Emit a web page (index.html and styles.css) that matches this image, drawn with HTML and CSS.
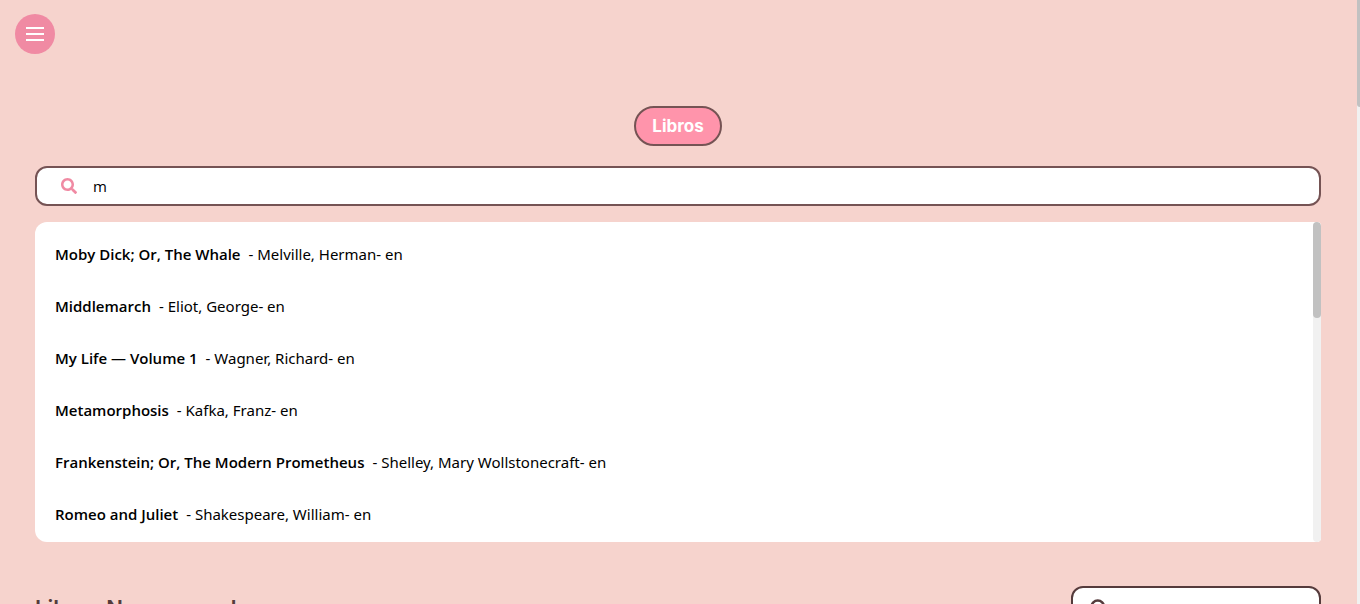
FILE: index.html
```html
<!DOCTYPE html>
<html lang="es">
<head>
<meta charset="utf-8">
<title>Libros</title>
<link rel="stylesheet" href="styles.css">
</head>
<body>
<div class="shell">
  <div class="page">
    <header class="topbar">
      <button class="menu" type="button" aria-label="Menú">
        <svg width="18" height="14" viewBox="0 0 18 14" aria-hidden="true"><path d="M0 1h18M0 7h18M0 13h18" stroke="#fff" stroke-width="2"/></svg>
      </button>
    </header>
    <main class="content">
      <button class="pill" type="button">Libros</button>
      <label class="search">
        <svg class="search-icon" width="16" height="16" viewBox="0 0 512 512" aria-hidden="true"><path fill="currentColor" d="M505 442.700L405.300 343c-4.500-4.500-10.600-7-17-7H372c27.600-35.300 44-79.700 44-128C416 93.100 322.900 0 208 0S0 93.100 0 208s93.100 208 208 208c48.300 0 92.700-16.400 128-44v16.300c0 6.400 2.500 12.500 7 17l99.700 99.700c9.400 9.400 24.600 9.400 33.900 0l28.300-28.300c9.400-9.400 9.400-24.600.1-34zM208 336c-70.700 0-128-57.200-128-128 0-70.700 57.200-128 128-128 70.700 0 128 57.200 128 128 0 70.700-57.200 128-128 128z"/></svg>
        <input class="search-input" type="text" value="m" aria-label="Buscar libros">
      </label>
      <div class="results">
        <ul class="result-list">
          <li class="result"><strong class="title">Moby Dick; Or, The Whale</strong><span class="meta">- Melville, Herman- en</span></li>
          <li class="result"><strong class="title">Middlemarch</strong><span class="meta">- Eliot, George- en</span></li>
          <li class="result"><strong class="title">My Life — Volume 1</strong><span class="meta">- Wagner, Richard- en</span></li>
          <li class="result"><strong class="title">Metamorphosis</strong><span class="meta">- Kafka, Franz- en</span></li>
          <li class="result"><strong class="title">Frankenstein; Or, The Modern Prometheus</strong><span class="meta">- Shelley, Mary Wollstonecraft- en</span></li>
          <li class="result"><strong class="title">Romeo and Juliet</strong><span class="meta">- Shakespeare, William- en</span></li>
        </ul>
        <div class="track"><div class="thumb"></div></div>
      </div>
      <section class="section-head">
        <h2 class="heading">Libros No comprados</h2>
        <label class="filter">
          <svg width="20" height="20" viewBox="0 0 16 16" aria-hidden="true"><path d="M11 11l4 4M12 7A5 5 0 1 1 2 7a5 5 0 0 1 10 0z" fill="none" stroke="currentColor" stroke-width="2"/></svg>
          <input class="search-input" type="text" aria-label="Filtrar">
        </label>
      </section>
    </main>
  </div>
  <div class="page-track"><div class="page-thumb"></div></div>
</div>
</body>
</html>
```
FILE: styles.css
```css
* { box-sizing: border-box; }

body {
  margin: 0;
  background: #f6d3cd;
  color: #000;
  font: 15px/20px "Segoe UI", "Open Sans", "Noto Sans", sans-serif;
}

.shell {
  display: flex;
  height: 100vh;
  overflow: hidden;
}

.page {
  flex: 1;
  min-width: 0;
  overflow: hidden;
}

.topbar { padding: 14px 15px 52px; display: flex; }

.menu {
  display: flex;
  align-items: center;
  justify-content: center;
  width: 40px;
  height: 40px;
  padding: 0;
  border: 0;
  border-radius: 50%;
  background: #f08aa3;
}

.content {
  display: flex;
  flex-direction: column;
  padding: 0 36px 40px 35px;
}

.pill {
  align-self: center;
  height: 40px;
  padding: 0 16px;
  border: 2px solid #755354;
  border-radius: 20px;
  background: #ff94ab;
  color: #fff;
  font: 700 17px/20px "Inter", "Open Sans", sans-serif;
}

.search {
  display: flex;
  align-items: center;
  gap: 16px;
  height: 40px;
  margin-top: 20px;
  padding: 0 24px;
  border: 2px solid #755354;
  border-radius: 12px;
  background: #fff;
}

.search-icon { color: #f08aa3; }

.search-input {
  flex: 1;
  min-width: 0;
  padding: 0;
  border: 0;
  outline: 0;
  background: transparent;
  color: #000;
  font: inherit;
}

.results {
  display: flex;
  height: 320px;
  margin-top: 16px;
  overflow: hidden;
  border-radius: 12px 4px 4px 12px;
  background: #fff;
}

.result-list {
  flex: 1;
  min-width: 0;
  margin: 0;
  padding: 6px 0;
  list-style: none;
}

.result {
  display: flex;
  align-items: center;
  gap: 8px;
  height: 52px;
  padding: 0 20px;
}

.title { font-weight: 600; }

.meta { font-family: "Segoe UI", "Noto Sans", sans-serif; }

.track {
  width: 8px;
  border-radius: 4px;
  background: #f1f1f1;
}

.thumb {
  height: 30%;
  border-radius: 4px;
  background: #c1c1c1;
}

.section-head {
  display: flex;
  align-items: center;
  justify-content: space-between;
  margin-top: 44px;
}

.heading {
  margin: 0;
  color: #553b3c;
  font: 600 22px/28px "Inter", "Open Sans", sans-serif;
}

.filter {
  display: flex;
  align-items: center;
  gap: 16px;
  width: 250px;
  height: 44px;
  padding: 0 16px;
  border: 2px solid #553b3c;
  border-radius: 12px;
  background: #fff;
  color: #553b3c;
}

.page-track {
  width: 3px;
  background: #f1f1f1;
}

.page-thumb {
  height: 17.7%;
  border-radius: 0 0 0 4px;
  background: #c1c1c1;
}
```
